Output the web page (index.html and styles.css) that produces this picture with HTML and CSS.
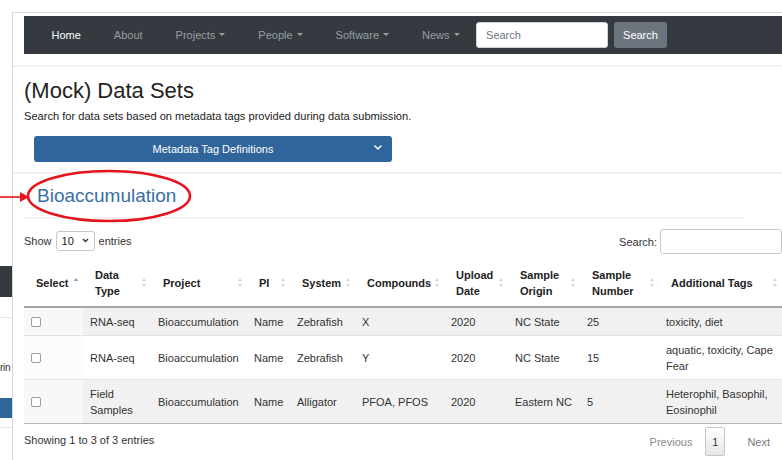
FILE: index.html
```html
<!DOCTYPE html>
<html lang="en">
<head>
<meta charset="utf-8">
<title>(Mock) Data Sets</title>
<link rel="stylesheet" href="styles.css">
</head>
<body>
<div class="desk">
  <aside class="backdrop">
    <div class="bd-nav"></div>
    <div class="bd-rule"></div>
    <div class="bd-text">rin</div>
    <div class="bd-btn"></div>
    <div class="bd-rule bd-rule-low"></div>
  </aside>

  <main class="window">
    <nav class="navbar">
      <a class="nav-link active" href="#">Home</a>
      <a class="nav-link" href="#">About</a>
      <a class="nav-link dropdown" href="#">Projects</a>
      <a class="nav-link dropdown" href="#">People</a>
      <a class="nav-link dropdown" href="#">Software</a>
      <a class="nav-link dropdown" href="#">News</a>
      <form class="nav-search">
        <input class="nav-input" type="text" placeholder="Search">
        <button class="nav-btn" type="button">Search</button>
      </form>
    </nav>
    <div class="rule rule-nav"></div>

    <section class="intro">
      <h1 class="page-title">(Mock) Data Sets</h1>
      <p class="lead">Search for data sets based on metadata tags provided during data submission.</p>
      <button class="collapse-btn" type="button">
        <span>Metadata Tag Definitions</span>
        <svg class="chev" width="8" height="5" viewBox="0 0 8 5"><polyline points="1,1 4,4 7,1" fill="none" stroke="#fff" stroke-width="1.5" stroke-linecap="round" stroke-linejoin="round"/></svg>
      </button>
    </section>
    <div class="rule rule-wide"></div>

    <h2 class="set-title">Bioaccumulation</h2>
    <div class="rule rule-short"></div>

    <div class="dt-top">
      <label class="dt-length">Show
        <span class="dt-select">10
          <svg width="7" height="5" viewBox="0 0 7 5"><polyline points="1,1 3.5,3.5 6,1" fill="none" stroke="#333" stroke-width="1.4"/></svg>
        </span>
        entries</label>
      <label class="dt-filter">Search:<span class="dt-input"></span></label>
    </div>

    <table class="dt">
      <colgroup>
        <col class="c-select"><col class="c-type"><col class="c-project"><col class="c-pi"><col class="c-system">
        <col class="c-comp"><col class="c-date"><col class="c-origin"><col class="c-number"><col class="c-tags">
      </colgroup>
      <thead>
        <tr>
          <th class="sorted">Select</th>
          <th class="sortable">Data Type</th>
          <th class="sortable">Project</th>
          <th class="sortable">PI</th>
          <th class="sortable">System</th>
          <th class="sortable">Compounds</th>
          <th class="sortable">Upload Date</th>
          <th class="sortable">Sample Origin</th>
          <th class="sortable">Sample Number</th>
          <th class="sortable">Additional Tags</th>
        </tr>
      </thead>
      <tbody>
        <tr class="odd">
          <td class="sel"><span class="box"></span></td>
          <td>RNA-seq</td><td>Bioaccumulation</td><td>Name</td><td>Zebrafish</td><td>X</td>
          <td>2020</td><td>NC State</td><td>25</td><td>toxicity, diet</td>
        </tr>
        <tr>
          <td class="sel"><span class="box"></span></td>
          <td>RNA-seq</td><td>Bioaccumulation</td><td>Name</td><td>Zebrafish</td><td>Y</td>
          <td>2020</td><td>NC State</td><td>15</td><td>aquatic, toxicity, Cape Fear</td>
        </tr>
        <tr class="odd">
          <td class="sel"><span class="box"></span></td>
          <td>Field Samples</td><td>Bioaccumulation</td><td>Name</td><td>Alligator</td><td>PFOA, PFOS</td>
          <td>2020</td><td>Eastern NC</td><td>5</td><td>Heterophil, Basophil, Eosinophil</td>
        </tr>
      </tbody>
    </table>

    <div class="dt-bottom">
      <div class="dt-info">Showing 1 to 3 of 3 entries</div>
      <div class="pager">
        <span class="pg-prev">Previous</span>
        <span class="pg-current">1</span>
        <span class="pg-next">Next</span>
      </div>
    </div>
  </main>
</div>

<svg class="callout" width="782" height="460" viewBox="0 0 782 460">
  <ellipse cx="109" cy="196" rx="81" ry="25" fill="none" stroke="#e5141c" stroke-width="2.6"/>
  <line x1="0" y1="197" x2="21" y2="197" stroke="#e5141c" stroke-width="1.6"/>
  <polygon points="29,197 20,192 20,202" fill="#e5141c"/>
</svg>
</body>
</html>
```
FILE: styles.css
```css
html, body {
  margin: 0;
  height: 100%;
  overflow: hidden;
  background: #fff;
}

body {
  position: relative;
  font-family: "Liberation Sans", Arial, sans-serif;
  font-size: 11px;
  color: #333;
}

.desk {
  display: flex;
  height: 100%;
}

/* window partly hidden behind the front one */
.backdrop {
  width: 12px;
  flex: none;
  overflow: hidden;
  display: flex;
  flex-direction: column;
}

.bd-nav {
  margin-top: 266px;
  height: 31px;
  background: #343a40;
}

.bd-rule {
  margin-top: 20px;
  height: 1px;
  background: #e4e4e4;
}

.bd-text {
  margin-top: 43px;
  font-size: 10px;
  line-height: 14px;
  letter-spacing: -0.3px;
  white-space: nowrap;
  color: #333;
}

.bd-btn {
  margin-top: 23px;
  height: 20px;
  background: #30659b;
}

.bd-rule-low {
  margin-top: 9px;
}

/* front window */
.window {
  flex: 1;
  min-width: 0;
  margin-top: 12px;
  border-top: 1px solid #dcdcdc;
  border-left: 1px solid #d6d6d6;
  overflow: hidden;
  display: flex;
  flex-direction: column;
}

.navbar {
  margin: 3px 0 0 11px;
  height: 38px;
  background: #343a40;
  display: flex;
  align-items: center;
  padding-left: 11px;
}

.nav-link {
  padding: 0 16.5px;
  color: #9a9da1;
  text-decoration: none;
  line-height: 16px;
}

.nav-link.active {
  color: #fff;
}

.nav-link.dropdown::after {
  content: "";
  display: inline-block;
  margin-left: 4px;
  vertical-align: 3px;
  border-top: 3.5px solid currentColor;
  border-left: 3.5px solid transparent;
  border-right: 3.5px solid transparent;
}

.nav-search {
  display: flex;
  margin: 0;
  gap: 6px;
}

.nav-input {
  width: 132px;
  height: 26px;
  box-sizing: border-box;
  border: 1px solid #ced4da;
  border-radius: 3px;
  padding: 0 9px;
  font: inherit;
  color: #495057;
}

.nav-input::placeholder {
  color: #6c757d;
}

.nav-btn {
  height: 26px;
  padding: 0 9px;
  border: none;
  border-radius: 3px;
  background: #6c757d;
  color: #fff;
  font: inherit;
}

.rule {
  height: 2px;
  background: #f1f1f1;
}

.rule-nav {
  margin-top: 11px;
}

.intro {
  padding-left: 11px;
}

.page-title {
  margin: 11px 0 0;
  font-size: 22px;
  line-height: 26px;
  font-weight: 500;
  color: #222;
}

.lead {
  margin: 5px 0 0;
  font-size: 11.1px;
  line-height: 14px;
  color: #222;
}

.collapse-btn {
  margin: 13px 0 0 10px;
  width: 358px;
  height: 26px;
  border: none;
  border-radius: 3px;
  background: #30659b;
  color: #fff;
  font: inherit;
  display: flex;
  align-items: center;
  justify-content: center;
  position: relative;
  padding: 0;
}

.collapse-btn .chev {
  position: absolute;
  right: 10px;
  top: 9px;
}

.rule-wide {
  margin-top: 10px;
}

.set-title {
  margin: 10px 0 0 24px;
  font-size: 19px;
  line-height: 24px;
  font-weight: 400;
  color: #3b6ea6;
}

.rule-short {
  margin: 9px 0 0 11px;
  width: 720px;
  height: 2px;
}

.dt-top {
  margin: 10px 0 0 11px;
  height: 25px;
  display: flex;
  align-items: center;
  justify-content: space-between;
}

.dt-length {
  display: flex;
  align-items: center;
  gap: 4px;
  margin-top: -2px;
}

.dt-select {
  width: 39px;
  height: 20px;
  box-sizing: border-box;
  border: 1px solid #c8c8c8;
  border-radius: 3px;
  display: flex;
  align-items: center;
  justify-content: space-between;
  padding: 0 5px;
  color: #222;
}

.dt-filter {
  display: flex;
  align-items: center;
  gap: 3px;
}

.dt-input {
  width: 122px;
  height: 25px;
  box-sizing: border-box;
  border: 1px solid #c8c8c8;
  border-radius: 3px;
}

.dt {
  margin: 6px 0 0 11px;
  width: 758px;
  flex: none;
  table-layout: fixed;
  border-collapse: collapse;
}

.c-select { width: 59px; }
.c-type { width: 68px; }
.c-project { width: 96px; }
.c-pi { width: 43px; }
.c-system { width: 65px; }
.c-comp { width: 89px; }
.c-date { width: 64px; }
.c-origin { width: 72px; }
.c-number { width: 79px; }
.c-tags { width: 123px; }

.dt th {
  position: relative;
  padding: 7px 10px 7px 12px;
  line-height: 16px;
  text-align: left;
  font-weight: 700;
  color: #222;
  border-bottom: 2px solid #a5a5a5;
  vertical-align: middle;
}

/* sort indicators */
.dt th::before,
.dt th::after {
  content: "";
  position: absolute;
  right: 5px;
  border-left: 2.5px solid transparent;
  border-right: 2.5px solid transparent;
}

.dt th::before {
  top: calc(50% - 5px);
  border-bottom: 3px solid #d6d6d6;
}

.dt th::after {
  top: calc(50% + 1px);
  border-top: 3px solid #d6d6d6;
}

.dt th.sorted::before {
  border-bottom-color: #7e93cf;
}

.dt th.sorted::after {
  border-top-color: transparent;
}

.dt td {
  padding: 6px 3px 5px 7px;
  line-height: 16px;
  vertical-align: middle;
  color: #333;
  border-top: 1px solid #e2e2e2;
}

.dt tbody tr:first-child td {
  border-top: none;
}

.dt tbody tr:last-child td {
  border-bottom: 1px solid #b5b5b5;
}

.dt tr.odd td {
  background: #f1f1f1;
}

.dt td.sel {
  background: #fcfcfc;
}

.dt tr.odd td.sel {
  background: #f8f8f8;
}

.box {
  display: block;
  width: 8px;
  height: 8px;
  border: 1px solid #9c9c9c;
  border-radius: 2px;
  background: #fff;
}

.dt-bottom {
  margin: 3px 0 0 11px;
  height: 29px;
  display: flex;
  align-items: center;
  justify-content: space-between;
}

.dt-info {
  margin-top: -3px;
}

.pager {
  display: flex;
  align-items: center;
  height: 100%;
}

.pg-prev {
  padding: 0 13px 0 0;
  color: #888;
}

.pg-current {
  width: 20px;
  height: 29px;
  box-sizing: border-box;
  border: 1px solid #c6c6c6;
  border-radius: 2px;
  background: linear-gradient(#fff, #e6e6e6);
  display: flex;
  align-items: center;
  justify-content: center;
  color: #333;
}

.pg-next {
  padding: 0 12px 0 22px;
  color: #777;
}

/* red annotation drawn over the page */
.callout {
  position: absolute;
  left: 0;
  top: 0;
  pointer-events: none;
}
```
